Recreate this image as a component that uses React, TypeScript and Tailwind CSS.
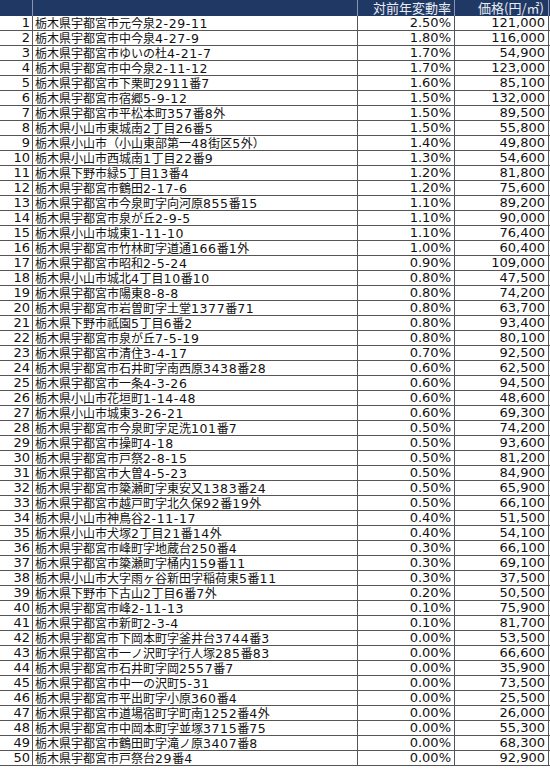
import React from "react";

const rows: [string, string, string][] = [
  ["栃木県宇都宮市元今泉2-29-11", "2.50%", "121,000"],
  ["栃木県宇都宮市中今泉4-27-9", "1.80%", "116,000"],
  ["栃木県宇都宮市ゆいの杜4-21-7", "1.70%", "54,900"],
  ["栃木県宇都宮市中今泉2-11-12", "1.70%", "123,000"],
  ["栃木県宇都宮市下栗町2911番7", "1.60%", "85,100"],
  ["栃木県宇都宮市宿郷5-9-12", "1.50%", "132,000"],
  ["栃木県宇都宮市平松本町357番8外", "1.50%", "89,500"],
  ["栃木県小山市東城南2丁目26番5", "1.50%", "55,800"],
  ["栃木県小山市（小山東部第一48街区5外）", "1.40%", "49,800"],
  ["栃木県小山市西城南1丁目22番9", "1.30%", "54,600"],
  ["栃木県下野市緑5丁目13番4", "1.20%", "81,800"],
  ["栃木県宇都宮市鶴田2-17-6", "1.20%", "75,600"],
  ["栃木県宇都宮市今泉町字向河原855番15", "1.10%", "89,200"],
  ["栃木県宇都宮市泉が丘2-9-5", "1.10%", "90,000"],
  ["栃木県小山市城東1-11-10", "1.10%", "76,400"],
  ["栃木県宇都宮市竹林町字道通166番1外", "1.00%", "60,400"],
  ["栃木県宇都宮市昭和2-5-24", "0.90%", "109,000"],
  ["栃木県小山市城北4丁目10番10", "0.80%", "47,500"],
  ["栃木県宇都宮市陽東8-8-8", "0.80%", "74,200"],
  ["栃木県宇都宮市岩曽町字土堂1377番71", "0.80%", "63,700"],
  ["栃木県下野市祇園5丁目6番2", "0.80%", "93,400"],
  ["栃木県宇都宮市泉が丘7-5-19", "0.80%", "80,100"],
  ["栃木県宇都宮市清住3-4-17", "0.70%", "92,500"],
  ["栃木県宇都宮市石井町字南西原3438番28", "0.60%", "62,500"],
  ["栃木県宇都宮市一条4-3-26", "0.60%", "94,500"],
  ["栃木県小山市花垣町1-14-48", "0.60%", "48,600"],
  ["栃木県小山市城東3-26-21", "0.60%", "69,300"],
  ["栃木県宇都宮市今泉町字足洗101番7", "0.50%", "74,200"],
  ["栃木県宇都宮市操町4-18", "0.50%", "93,600"],
  ["栃木県宇都宮市戸祭2-8-15", "0.50%", "81,200"],
  ["栃木県宇都宮市大曽4-5-23", "0.50%", "84,900"],
  ["栃木県宇都宮市簗瀬町字東安又1383番24", "0.50%", "65,900"],
  ["栃木県宇都宮市越戸町字北久保92番19外", "0.50%", "66,100"],
  ["栃木県小山市神鳥谷2-11-17", "0.40%", "51,500"],
  ["栃木県小山市犬塚2丁目21番14外", "0.40%", "54,100"],
  ["栃木県宇都宮市峰町字地蔵台250番4", "0.30%", "66,100"],
  ["栃木県宇都宮市簗瀬町字桶内159番11", "0.30%", "69,100"],
  ["栃木県小山市大字雨ヶ谷新田字稲荷東5番11", "0.30%", "37,500"],
  ["栃木県下野市下古山2丁目6番7外", "0.20%", "50,500"],
  ["栃木県宇都宮市峰2-11-13", "0.10%", "75,900"],
  ["栃木県宇都宮市新町2-3-4", "0.10%", "81,700"],
  ["栃木県宇都宮市下岡本町字釜井台3744番3", "0.00%", "53,500"],
  ["栃木県宇都宮市一ノ沢町字行人塚285番83", "0.00%", "66,600"],
  ["栃木県宇都宮市石井町字岡2557番7", "0.00%", "35,900"],
  ["栃木県宇都宮市中一の沢町5-31", "0.00%", "73,500"],
  ["栃木県宇都宮市平出町字小原360番4", "0.00%", "25,500"],
  ["栃木県宇都宮市道場宿町字町南1252番4外", "0.00%", "26,000"],
  ["栃木県宇都宮市中岡本町字並塚3715番75", "0.00%", "55,300"],
  ["栃木県宇都宮市鶴田町字滝ノ原3407番8", "0.00%", "68,300"],
  ["栃木県宇都宮市戸祭台29番4", "0.00%", "92,900"],
];

const jp = "font-['Noto_Sans_CJK_JP',sans-serif]";
const num = "font-['DejaVu_Sans',Verdana,sans-serif]";

function Address({ text }: { text: string }) {
  const parts = text.split(/([0-9\-]+)/);
  return (
    <>
      {parts.map((p, i) =>
        i % 2 === 1 ? (
          <span key={i} className={`${num} text-[12.5px] tracking-[0.6px]`}>
            {p}
          </span>
        ) : (
          <span key={i}>{p}</span>
        )
      )}
    </>
  );
}

export default function App() {
  return (
    <div className="w-[550px] h-[769px] bg-white text-[#111]">
      <div className="grid grid-cols-[33px_325px_97px_94px] h-[16px] bg-[#203864] text-[#e8ecf4] text-[13px] leading-[15px]">
        <div className="border-r border-[#8a96b0]" />
        <div className="border-r border-[#8a96b0]" />
        <div className={`border-r border-[#8a96b0] text-right pr-[3px] ${jp}`}>対前年変動率</div>
        <div className={`border-r border-[#8a96b0] text-right pr-[4px] ${jp}`}>価格(円/㎡)</div>
      </div>
      {rows.map((r, i) => (
        <div
          key={i}
          className="grid grid-cols-[33px_325px_97px_94px] h-[15px] border-b border-[#555] leading-[14px] whitespace-nowrap overflow-hidden"
        >
          <div className={`border-r border-[#555] text-right pr-[2px] text-[13px] ${num}`}>{i + 1}</div>
          <div className={`border-r border-[#555] pl-[2px] text-[12px] ${jp}`}>
            <Address text={r[0]} />
          </div>
          <div className={`border-r border-[#555] text-right pr-[3px] text-[13px] ${num}`}>{r[1]}</div>
          <div className={`border-r border-[#555] text-right pr-[3px] text-[13px] ${num}`}>{r[2]}</div>
        </div>
      ))}
    </div>
  );
}
